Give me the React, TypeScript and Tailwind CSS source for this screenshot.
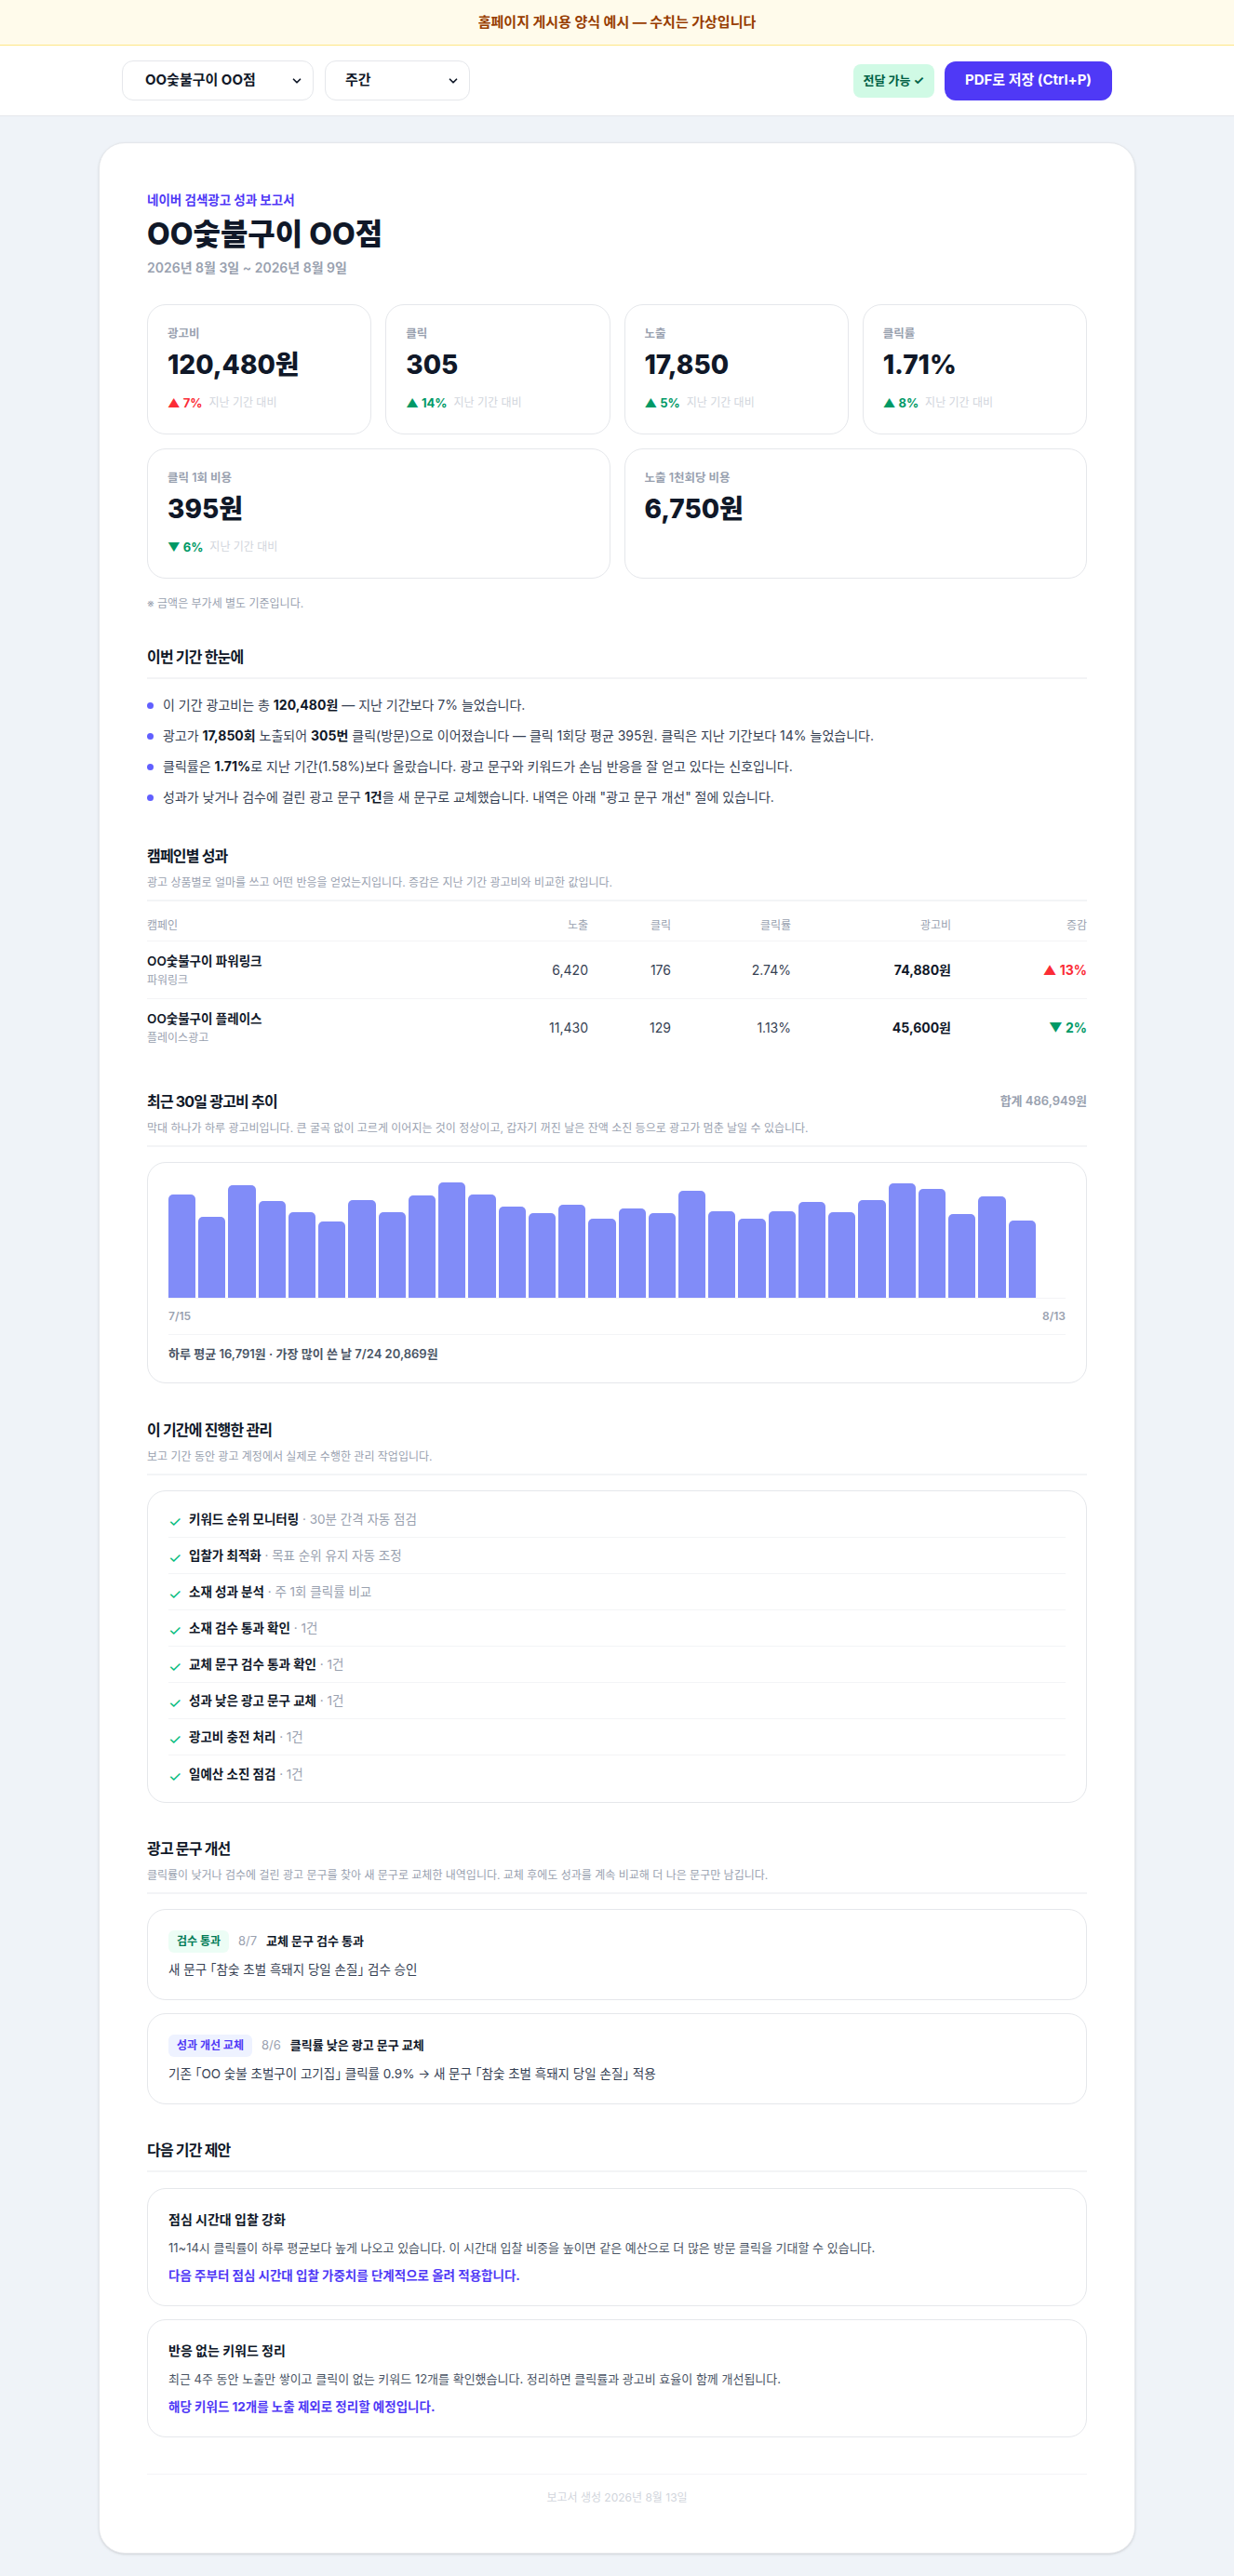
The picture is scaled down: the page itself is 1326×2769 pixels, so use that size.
import { ChevronDown } from "lucide-react";

type Metric = {
  label: string;
  value: string;
  change?: { dir: "up" | "down"; pct: string; tone: "red" | "green" };
  span?: boolean;
};

const metrics: Metric[] = [
  { label: "광고비", value: "120,480원", change: { dir: "up", pct: "7%", tone: "red" } },
  { label: "클릭", value: "305", change: { dir: "up", pct: "14%", tone: "green" } },
  { label: "노출", value: "17,850", change: { dir: "up", pct: "5%", tone: "green" } },
  { label: "클릭률", value: "1.71%", change: { dir: "up", pct: "8%", tone: "green" } },
  { label: "클릭 1회 비용", value: "395원", change: { dir: "down", pct: "6%", tone: "green" }, span: true },
  { label: "노출 1천회당 비용", value: "6,750원", span: true },
];

const campaigns = [
  { name: "OO숯불구이 파워링크", type: "파워링크", imp: "6,420", clicks: "176", ctr: "2.74%", cost: "74,880원", dir: "up", pct: "13%" },
  { name: "OO숯불구이 플레이스", type: "플레이스광고", imp: "11,430", clicks: "129", ctr: "1.13%", cost: "45,600원", dir: "down", pct: "2%" },
];

// 7/15 ~ 8/13 daily spend (today has no data yet)
const daily = [
  18650, 14620, 20340, 17480, 15460, 13790, 17690, 15470, 18530, 20869,
  18700, 16480, 15320, 16850, 14280, 16140, 15300, 19370, 15640, 14290,
  15660, 17310, 15470, 17650, 20710, 19680, 15130, 18330, 13950, 0,
];
const maxDaily = Math.max(...daily);

const tasks = [
  { title: "키워드 순위 모니터링", note: "30분 간격 자동 점검" },
  { title: "입찰가 최적화", note: "목표 순위 유지 자동 조정" },
  { title: "소재 성과 분석", note: "주 1회 클릭률 비교" },
  { title: "소재 검수 통과 확인", note: "1건" },
  { title: "교체 문구 검수 통과 확인", note: "1건" },
  { title: "성과 낮은 광고 문구 교체", note: "1건" },
  { title: "광고비 충전 처리", note: "1건" },
  { title: "일예산 소진 점검", note: "1건" },
];

const suggestions = [
  {
    title: "점심 시간대 입찰 강화",
    body: "11~14시 클릭률이 하루 평균보다 높게 나오고 있습니다. 이 시간대 입찰 비중을 높이면 같은 예산으로 더 많은 방문 클릭을 기대할 수 있습니다.",
    action: "다음 주부터 점심 시간대 입찰 가중치를 단계적으로 올려 적용합니다.",
  },
  {
    title: "반응 없는 키워드 정리",
    body: "최근 4주 동안 노출만 쌓이고 클릭이 없는 키워드 12개를 확인했습니다. 정리하면 클릭률과 광고비 효율이 함께 개선됩니다.",
    action: "해당 키워드 12개를 노출 제외로 정리할 예정입니다.",
  },
];

// corner brackets set half-width
function Q({ children }: { children: string }) {
  return (
    <>
      <span className="[font-feature-settings:'halt']">「</span>
      {children}
      <span className="[font-feature-settings:'halt']">」</span>
    </>
  );
}

function MetricCard({ m }: { m: Metric }) {
  return (
    <div
      className={`rounded-[20px] border border-gray-200 bg-white px-[21px] pt-[22px] pb-[24px] ${
        m.span ? "col-span-2" : ""
      }`}
    >
      <div className="text-[12.5px] font-semibold leading-[18px] text-gray-400">{m.label}</div>
      <div className="mt-[6px] text-[28px] font-extrabold leading-[36px] text-gray-900">{m.value}</div>
      {m.change && (
        <div className="mt-[14px] flex items-center text-[13px] leading-[18px]">
          <span
            className={`font-bold ${m.change.tone === "red" ? "text-red-500" : "text-emerald-600"}`}
          >
            {m.change.dir === "up" ? "▲" : "▼"} {m.change.pct}
          </span>
          <span className="ml-[7px] text-[12px] text-gray-300">지난 기간 대비</span>
        </div>
      )}
    </div>
  );
}

function SectionHead({ title, sub, right }: { title: string; sub?: string; right?: string }) {
  return (
    <div className="border-b-2 border-gray-100 pb-[9px]">
      <div className="flex items-center justify-between">
        <h2 className="text-[16px] font-bold leading-[26px] tracking-[-0.05em] text-gray-900">{title}</h2>
        {right && <span className="text-[13px] font-semibold text-gray-400">{right}</span>}
      </div>
      {sub && <p className="mt-[7px] text-[12px] leading-[18px] text-gray-400">{sub}</p>}
    </div>
  );
}

export default function App() {
  return (
    <div className="min-h-screen bg-[#eff3f8] font-[family-name:Inter,'Noto_Sans_CJK_KR',sans-serif] text-gray-900">
      <div className="border-b border-amber-200 bg-amber-50 py-[14px] text-center text-[15px] font-bold leading-5 text-amber-800">
        홈페이지 게시용 양식 예시 — 수치는 가상입니다
      </div>

      <header className="border-b border-gray-200 bg-white">
        <div className="mx-auto flex h-[75px] w-[1064px] items-center justify-between">
          <div className="flex gap-3">
            <button className="flex h-[43px] w-[206px] items-center justify-between rounded-xl border border-gray-200 bg-white pl-[24px] pr-[10px] text-[15px] font-bold">
              OO숯불구이 OO점
              <ChevronDown size={14} strokeWidth={3} />
            </button>
            <button className="flex h-[43px] w-[156px] items-center justify-between rounded-xl border border-gray-200 bg-white pl-[21px] pr-[10px] text-[15px] font-bold">
              주간
              <ChevronDown size={14} strokeWidth={3} />
            </button>
          </div>
          <div className="flex items-center gap-[11px]">
            <span className="flex h-[36px] items-center rounded-lg bg-emerald-100 px-[11px] text-[13px] font-bold text-emerald-800">
              전달 가능 ✓
            </span>
            <button className="h-[42px] w-[180px] rounded-xl bg-indigo-600 text-[15px] font-bold text-white">
              PDF로 저장 (Ctrl+P)
            </button>
          </div>
        </div>
      </header>

      <main className="pt-[28px] pb-[27px]">
        <div className="mx-auto w-[1114px] rounded-[28px] border border-gray-200 bg-white px-[51px] pt-[51px] pb-[51px] shadow-sm">
          <div className="text-[13.5px] font-bold leading-5 text-indigo-600">네이버 검색광고 성과 보고서</div>
          <h1 className="mt-[8px] text-[32px] font-extrabold leading-[38px] text-gray-900">OO숯불구이 OO점</h1>
          <div className="mt-[6px] text-[14px] font-semibold leading-[22px] text-gray-400">
            2026년 8월 3일 ~ 2026년 8월 9일
          </div>

          <div className="mt-[28px] grid grid-cols-4 gap-[15px]">
            {metrics.map((m) => (
              <MetricCard key={m.label} m={m} />
            ))}
          </div>
          <p className="mt-[19px] text-[12px] leading-4 text-gray-400">※ 금액은 부가세 별도 기준입니다.</p>

          {/* summary */}
          <section className="mt-[36px]">
            <SectionHead title="이번 기간 한눈에" />
            <ul className="mt-[16px] flex flex-col gap-[9px] text-[14px] leading-6 text-gray-700">
              <li className="flex items-center gap-[10px]">
                <span className="h-[7px] w-[7px] shrink-0 rounded-full bg-indigo-500" />
                <span>
                  이 기간 광고비는 총 <b className="text-gray-900">120,480원</b> — 지난 기간보다 7% 늘었습니다.
                </span>
              </li>
              <li className="flex items-center gap-[10px]">
                <span className="h-[7px] w-[7px] shrink-0 rounded-full bg-indigo-500" />
                <span>
                  광고가 <b className="text-gray-900">17,850회</b> 노출되어 <b className="text-gray-900">305번</b>{" "}
                  클릭(방문)으로 이어졌습니다 — 클릭 1회당 평균 395원. 클릭은 지난 기간보다 14% 늘었습니다.
                </span>
              </li>
              <li className="flex items-center gap-[10px]">
                <span className="h-[7px] w-[7px] shrink-0 rounded-full bg-indigo-500" />
                <span>
                  클릭률은 <b className="text-gray-900">1.71%</b>로 지난 기간(1.58%)보다 올랐습니다. 광고 문구와
                  키워드가 손님 반응을 잘 얻고 있다는 신호입니다.
                </span>
              </li>
              <li className="flex items-center gap-[10px]">
                <span className="h-[7px] w-[7px] shrink-0 rounded-full bg-indigo-500" />
                <span>
                  성과가 낮거나 검수에 걸린 광고 문구 <b className="text-gray-900">1건</b>을 새 문구로 교체했습니다.
                  내역은 아래 "광고 문구 개선" 절에 있습니다.
                </span>
              </li>
            </ul>
          </section>

          {/* campaigns */}
          <section className="mt-[38px]">
            <SectionHead
              title="캠페인별 성과"
              sub="광고 상품별로 얼마를 쓰고 어떤 반응을 얻었는지입니다. 증감은 지난 기간 광고비와 비교한 값입니다."
            />
            <div className="mt-[10px]">
              <div className="grid grid-cols-[1fr_89px_89px_129px_172px_146px] border-b border-gray-100 py-[8px] text-[12px] leading-4 text-gray-400">
                <span>캠페인</span>
                <span className="text-right">노출</span>
                <span className="text-right">클릭</span>
                <span className="text-right">클릭률</span>
                <span className="text-right">광고비</span>
                <span className="text-right">증감</span>
              </div>
              {campaigns.map((c, i) => (
                <div
                  key={c.name}
                  className={`grid grid-cols-[1fr_89px_89px_129px_172px_146px] items-center py-[11px] text-[14px] text-gray-700 ${
                    i === 0 ? "border-b border-gray-100" : ""
                  }`}
                >
                  <div>
                    <div className="text-[13.5px] font-semibold leading-5 text-gray-900">{c.name}</div>
                    <div className="mt-[3px] text-[12px] leading-4 text-gray-400">{c.type}</div>
                  </div>
                  <span className="text-right">{c.imp}</span>
                  <span className="text-right">{c.clicks}</span>
                  <span className="text-right">{c.ctr}</span>
                  <span className="text-right font-bold text-gray-900">{c.cost}</span>
                  <span
                    className={`text-right font-bold ${c.dir === "up" ? "text-red-500" : "text-emerald-600"}`}
                  >
                    {c.dir === "up" ? "▲" : "▼"} {c.pct}
                  </span>
                </div>
              ))}
            </div>
          </section>

          {/* 30-day spend chart */}
          <section className="mt-[36px]">
            <SectionHead
              title="최근 30일 광고비 추이"
              right="합계 486,949원"
              sub="막대 하나가 하루 광고비입니다. 큰 굴곡 없이 고르게 이어지는 것이 정상이고, 갑자기 꺼진 날은 잔액 소진 등으로 광고가 멈춘 날일 수 있습니다."
            />
            <div className="mt-[16px] rounded-[20px] border border-gray-200 p-[22px]">
              <div className="flex h-[124px] items-end gap-[3px] border-b border-gray-100">
                {daily.map((v, i) => (
                  <div
                    key={i}
                    className="flex-1 rounded-t-[5px] bg-[#818cf8]"
                    style={{ height: `${(v / maxDaily) * 124}px` }}
                  />
                ))}
              </div>
              <div className="mt-[11px] flex justify-between text-[12px] font-semibold leading-4 text-gray-400">
                <span>7/15</span>
                <span>8/13</span>
              </div>
              <div className="mt-[11px] border-t border-gray-100 pt-[11px] text-[13px] font-semibold leading-[18px] text-gray-600">
                하루 평균 16,791원 · 가장 많이 쓴 날 7/24 20,869원
              </div>
            </div>
          </section>

          {/* work log */}
          <section className="mt-[37px]">
            <SectionHead title="이 기간에 진행한 관리" sub="보고 기간 동안 광고 계정에서 실제로 수행한 관리 작업입니다." />
            <div className="mt-[16px] rounded-[20px] border border-gray-200 px-[22px] py-[11px]">
              {tasks.map((t, i) => (
                <div
                  key={t.title}
                  className={`flex h-[39px] items-center gap-[8px] text-[13.5px] leading-5 ${
                    i < tasks.length - 1 ? "border-b border-gray-100" : ""
                  }`}
                >
                  <span className="w-[14px] translate-y-[2px] text-[16px] leading-5 text-emerald-500">✓</span>
                  <span>
                    <b className="font-bold text-gray-900">{t.title}</b>
                    <span className="text-gray-400"> · {t.note}</span>
                  </span>
                </div>
              ))}
            </div>
          </section>

          {/* ad copy changes */}
          <section className="mt-[36px]">
            <SectionHead
              title="광고 문구 개선"
              sub="클릭률이 낮거나 검수에 걸린 광고 문구를 찾아 새 문구로 교체한 내역입니다. 교체 후에도 성과를 계속 비교해 더 나은 문구만 남깁니다."
            />
            <div className="mt-[16px] flex flex-col gap-[14px]">
              <div className="rounded-[20px] border border-gray-200 p-[22px]">
                <div className="flex items-center gap-[10px]">
                  <span className="rounded-md bg-emerald-50 px-[9px] py-[4px] text-[12px] font-bold leading-4 text-emerald-700">
                    검수 통과
                  </span>
                  <span className="text-[13px] text-gray-400">8/7</span>
                  <span className="text-[13px] font-bold text-gray-900">교체 문구 검수 통과</span>
                </div>
                <p className="mt-[8px] text-[13.5px] leading-5 text-gray-700">
                  새 문구 <Q>참숯 초벌 흑돼지 당일 손질</Q> 검수 승인
                </p>
              </div>
              <div className="rounded-[20px] border border-gray-200 p-[22px]">
                <div className="flex items-center gap-[10px]">
                  <span className="rounded-md bg-indigo-50 px-[9px] py-[4px] text-[12px] font-bold leading-4 text-indigo-600">
                    성과 개선 교체
                  </span>
                  <span className="text-[13px] text-gray-400">8/6</span>
                  <span className="text-[13px] font-bold text-gray-900">클릭률 낮은 광고 문구 교체</span>
                </div>
                <p className="mt-[8px] text-[13.5px] leading-5 text-gray-700">
                  기존 <Q>OO 숯불 초벌구이 고기집</Q> 클릭률 0.9% → 새 문구 <Q>참숯 초벌 흑돼지 당일 손질</Q> 적용
                </p>
              </div>
            </div>
          </section>

          {/* suggestions */}
          <section className="mt-[36px]">
            <SectionHead title="다음 기간 제안" />
            <div className="mt-[17px] flex flex-col gap-[14px]">
              {suggestions.map((s) => (
                <div key={s.title} className="rounded-[20px] border border-gray-200 px-[22px] pt-[22px] pb-[22px]">
                  <h3 className="text-[14px] font-bold leading-[22px] text-gray-900">{s.title}</h3>
                  <p className="mt-[9px] text-[13px] leading-5 text-gray-600">{s.body}</p>
                  <p className="mt-[10px] text-[13.5px] font-bold leading-5 text-indigo-600">{s.action}</p>
                </div>
              ))}
            </div>
          </section>

          <footer className="mt-[39px] border-t border-gray-100 pt-[17px] text-center text-[12px] leading-4 text-gray-300">
            보고서 생성 2026년 8월 13일
          </footer>
        </div>
      </main>
    </div>
  );
}
